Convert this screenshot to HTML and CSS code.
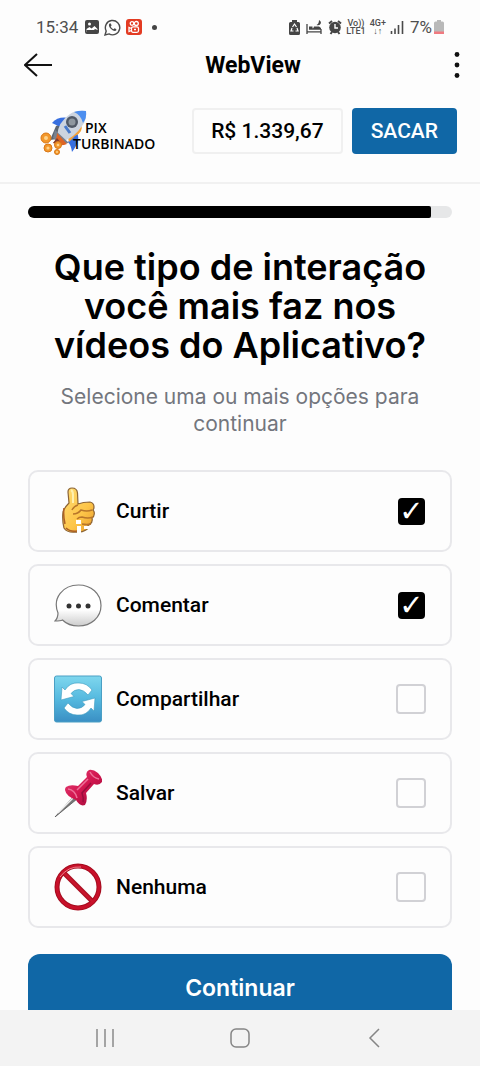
FILE: index.html
```html
<!DOCTYPE html>
<html lang="pt-BR">
<head>
	<title>WebView</title>
	<meta charset="UTF-8">
	<meta name="viewport" content="width=device-width, initial-scale=1.0">
	<link rel="stylesheet" href="styles.css">
</head>
<body>
	<div class="status-bar">
		<span>15:34</span>
		<svg class="status-image" width="14" height="14" viewBox="0 0 14 14"><rect width="14" height="14" rx="2" fill="#454545"/><circle cx="4.500" cy="4" r="1.500" fill="#fff"/><path d="M1.500 12V9l3-2 2 1.500L9.500 6l3 3v1L10 9 7 12z" fill="#fff"/><path d="M1.500 11h11" stroke="#454545" stroke-width="2"/></svg>
		<svg width="17" height="17" viewBox="0 0 17 17"><path d="M1 16l1.200-4A7.200 7.200 0 1 1 5 14.900z" fill="none" stroke="#4a4a4a" stroke-width="1.400"/><path d="M5.700 4.500c-1.500 1-.8 3.500 1.300 5.500s4.500 2.700 5.300 1.200c.4-.8 0-1.200-1.700-2l-1.100 1C8.200 9.700 7 8.400 6.700 7.400l.9-1C7 4.800 6.500 4 5.700 4.500z" fill="#4a4a4a"/></svg>
		<svg width="16" height="16" viewBox="0 0 16 16"><rect width="16" height="16" rx="3" fill="#e33b22"/><g fill="none" stroke="#fff" stroke-width="1.300"><circle cx="6" cy="4.500" r="1.800"/><circle cx="10.300" cy="4.500" r="2"/><rect x="5.500" y="7.800" width="7" height="5.500" rx="1.500"/><path d="M5.500 9.500L3 8.500v4l2.500-1"/><path d="M8 10.500h2"/></g></svg>
		<span class="dot"></span>
		<div class="status-right">
			<svg width="11" height="15" viewBox="0 0 11 15"><path d="M3 0h5v2h1.500Q11 2 11 3.500v10Q11 15 9.500 15h-8Q0 15 0 13.500v-10Q0 2 1.500 2H3z" fill="#454545"/><path d="M3.500 7l2-3 2 3M8 8l1 3H6.500M4.500 11H2l1-3" fill="none" stroke="#fff" stroke-width="1.200"/></svg>
			<svg class="status-bed" width="16" height="15" viewBox="0 0 16 15"><path d="M1 4v10M1 11.800h14M15 14V9M3 9h12" fill="none" stroke="#454545" stroke-width="1.300"/><path d="M3 6.500h3.500V9H3zM7 9l1-2.500h5l2 1.500v1z" fill="#454545"/><path d="M13 0q2 1 2 3-1 3-4.500 2Q13 4 13 0z" fill="#454545"/></svg>
			<svg class="status-alarm" width="14" height="15" viewBox="0 0 14 15"><circle cx="7" cy="7.500" r="5.800" fill="#454545"/><path d="M1 3.500L4 1M13 3.500L10 1M2.500 14l1.500-2M11.500 14L10 12" stroke="#454545" stroke-width="2"/><path d="M7 4v4h3" fill="none" stroke="#fff" stroke-width="1.400"/></svg>
			<span class="net">Vo))<br>LTE1</span>
			<span class="net">4G+<br>↓↑</span>
			<svg width="14" height="14" viewBox="0 0 14 14"><path d="M1.500 14v-3M5 14V8.500M8.500 14V5M12.500 14V1" stroke="#4a4a4a" stroke-width="1.600"/></svg>
			<span class="battery">7%<svg width="10" height="14" viewBox="0 0 10 14"><path d="M3 0h4v1.500h1.500Q10 1.500 10 3v11H0V3q0-1.500 1.500-1.500H3z" fill="#b9b9b9"/><path d="M0 11.500h10V14H0z" fill="#f07a80"/></svg></span>
		</div>
	</div>

	<div class="title-bar">
		<button class="icon-btn" type="button" aria-label="Voltar">
			<svg width="28" height="26" viewBox="0 0 28 26"><path d="M13 2L1 13l12 11M1 13h27" fill="none" stroke="#111" stroke-width="2"/></svg>
		</button>
		<span class="page-name">WebView</span>
		<button class="icon-btn" type="button" aria-label="Mais">
			<svg width="6" height="26" viewBox="0 0 6 26"><g fill="#111"><circle cx="3" cy="2.500" r="2.400"/><circle cx="3" cy="13" r="2.400"/><circle cx="3" cy="23.500" r="2.400"/></g></svg>
		</button>
	</div>

	<header class="header">
		<div class="logo">
			<svg width="48" height="48" viewBox="0 0 48 48">
				<path d="M10 31l6-14 14-6-6 18z" fill="#5b6573"/>
				<path d="M12 14q6-7 17-5l-6 9q-6-1-11-4z" fill="#376fe0"/>
				<path d="M36 22q6 8-4 21-1-7-4-10z" fill="#376fe0"/>
				<path d="M41 15q3 8-6 12l-6 6-1-4z" fill="#f5a33b"/>
				<path d="M17 27Q18 13 30 5q6-4 16-3 1 9-4 15-7 11-20 16z" fill="#ccd4df"/>
				<path d="M34 3q6-2 12-1 1 7-3 12-2-8-9-11z" fill="#4c8eef"/>
				<path d="M15 21l14 13-9 1-7-6z" fill="#77818f"/>
				<circle cx="32" cy="13" r="6" fill="#505966"/><circle cx="32" cy="13" r="3.500" fill="#8e979f"/>
				<path d="M17 24l10 11q-7 3-14-1 4-4 4-10z" fill="#dd6425"/><path d="M17 29l4 5-8 0z" fill="#843f2e"/>
				<path d="M25 17l5 7" stroke="#4779ca" stroke-width="3"/>
				<g fill="#f3982c" stroke="#d97817"><circle cx="6" cy="29" r="5"/><circle cx="8" cy="39" r="4"/><circle cx="18" cy="36" r="3.500"/><circle cx="17" cy="43" r="2.500"/></g>
				<g fill="#ffd38a"><circle cx="6" cy="29" r="2"/><circle cx="8" cy="39" r="1.600"/><circle cx="18" cy="36" r="1.300"/><circle cx="17" cy="43" r="1"/></g>
			</svg>
			<div class="logo-text"><div class="logo-pix">PIX</div><div>TURBINADO</div></div>
		</div>
		<div class="balance">R$ 1.339,67</div>
		<button class="withdraw" type="button">SACAR</button>
	</header>

	<main class="quiz">
		<div class="progress"><div class="progress-fill" style="width: 95%"></div></div>
		<h1>Que tipo de interação você mais faz nos vídeos do Aplicativo?</h1>
		<p class="hint">Selecione uma ou mais opções para continuar</p>

		<form class="options">
			<label class="option">
				<svg class="emoji" viewBox="0 0 48 48">
					<defs><linearGradient id="skin" x1="0" y1="0" x2="1" y2="1"><stop offset="0" stop-color="#ffdc75"/><stop offset=".6" stop-color="#fdc548"/><stop offset="1" stop-color="#e89a2c"/></linearGradient></defs>
					<path d="M14 5q0-4 4-4 5 0 5.500 5L24 17q5-2 12-2 4 1 4 5 0 2-1 3 2 2 1 5 0 2-2 3 1 4-2 6-1 1-2 1 1 4-2 5-5 3-10 2-9 1-12-4-2-8-1-16 1-4 6-9z" fill="url(#skin)" stroke="#8c6435" stroke-width="1.200"/>
					<path d="M38 23q-5 2-11 0-3 4-8 4M39 30q-5 2-11 0-3 0-5 2m14 5q-4 1-9 0M24 18q-4 1-6 5" fill="none" stroke="#b8762a" stroke-width="1.500"/>
					<path d="M17 3q2 1 2 5v8" fill="none" stroke="#fff0af" stroke-width="2"/>
					<path d="M12 41q4 4 11 3M10 21q-1 8 1 16" fill="none" stroke="#ac6025" stroke-width="1.500"/>
					<path d="M22 33h5v4h-5zM23 39h4v8h-4zM30 39h5v3h-5z" fill="#fff"/>
				</svg>
				<span class="option-name">Curtir</span>
				<input type="checkbox" name="interacao" value="curtir" checked>
			</label>
			<label class="option">
				<svg class="emoji" viewBox="0 0 48 48">
					<defs><linearGradient id="bubble" x1="0" y1="0" x2="0" y2="1"><stop offset=".6" stop-color="#fff"/><stop offset="1" stop-color="#ccc"/></linearGradient></defs>
					<path d="M24.500 4C37 4 47 12.500 47 24.500S37 45 24.500 45c-7 0-12-2-16-6-2 1-4 1-7.500 1 2-2 3-4 3-8-6-15 5-28 20.500-28z" fill="url(#bubble)" stroke="#777" stroke-width="1.200"/>
					<g fill="#333"><circle cx="15" cy="25" r="2.500"/><circle cx="24.500" cy="25" r="2.500"/><circle cx="34" cy="25" r="2.500"/></g>
				</svg>
				<span class="option-name">Comentar</span>
				<input type="checkbox" name="interacao" value="comentar" checked>
			</label>
			<label class="option">
				<svg class="emoji" viewBox="0 0 48 48">
					<defs><linearGradient id="sky" x1="0" y1="0" x2="0" y2="1"><stop offset="0" stop-color="#7fd7ee"/><stop offset=".5" stop-color="#55b9df"/><stop offset="1" stop-color="#3a8fc4"/></linearGradient></defs>
					<rect x=".5" y="1" width="47" height="46" rx="2" fill="url(#sky)" stroke="#4a9fc4"/>
					<g fill="#fff" stroke="#3e9cc0" stroke-width=".6">
						<path d="M8 12l3 3Q16 7 25 8q8 0 13 7l-4 5q-4-5-9-5.500-5 0-8 4l3 3L7 25z"/>
						<path d="M8 12l3 3Q16 7 25 8q8 0 13 7l-4 5q-4-5-9-5.500-5 0-8 4l3 3L7 25z" transform="rotate(180 24 24)"/>
					</g>
				</svg>
				<span class="option-name">Compartilhar</span>
				<input type="checkbox" name="interacao" value="compartilhar">
			</label>
			<label class="option">
				<svg class="emoji" viewBox="0 0 48 48">
					<defs><linearGradient id="pin" x1="0" y1="0" x2="1" y2="1"><stop offset="0" stop-color="#e8477d"/><stop offset=".5" stop-color="#d2164f"/><stop offset="1" stop-color="#970b38"/></linearGradient></defs>
					<path d="M20 27L1 48l22-18z" fill="#777" stroke="#555" stroke-width=".8"/><path d="M19 29L4 44" stroke="#eee" stroke-width="1.500"/>
					<path d="M12 18q4-3 12-1l9-9q-2-5 2-7 4-1 9 3 5 5 4 9-3 4-8 2l-8 9q2 7-1 12-5 2-9-5-10-4-11-10 0-2 1-3z" fill="url(#pin)"/>
					<path d="M34 10L23 21M14 20q7 1 9 9M36 3q3 6 9 7" fill="none" stroke="#ee6f97" stroke-width="1.500"/>
					<path d="M37 14l-9 10q2 5 1 9" fill="none" stroke="#990e3d" stroke-width="1.500"/>
				</svg>
				<span class="option-name">Salvar</span>
				<input type="checkbox" name="interacao" value="salvar">
			</label>
			<label class="option">
				<svg class="emoji" viewBox="0 0 48 48">
					<g fill="none"><path d="M9 9l30 30" stroke="#a90d20" stroke-width="5"/><circle cx="24" cy="24" r="21" stroke="#a40c1e" stroke-width="5"/><circle cx="24" cy="24" r="21" stroke="#c8102a" stroke-width="3"/><path d="M9 9l30 30" stroke="#c8152c" stroke-width="2.500"/><path d="M6 14Q14 3 27 4" stroke="#f0808c"/></g>
				</svg>
				<span class="option-name">Nenhuma</span>
				<input type="checkbox" name="interacao" value="nenhuma">
			</label>
			<button class="continue" type="submit">Continuar</button>
		</form>
	</main>

	<nav class="nav-bar">
		<button class="icon-btn" type="button" aria-label="Recentes"><svg width="20" height="20" viewBox="0 0 20 20"><path d="M2 1v18M10 1v18M18 1v18" stroke="#8b8b8b" stroke-width="1.500"/></svg></button>
		<button class="icon-btn" type="button" aria-label="Início"><svg width="20" height="20" viewBox="0 0 20 20"><rect x="1" y="1" width="18" height="18" rx="5" fill="none" stroke="#858585" stroke-width="1.500"/></svg></button>
		<button class="icon-btn" type="button" aria-label="Voltar"><svg width="20" height="20" viewBox="0 0 20 20"><path d="M14 1L5 10l9 9" fill="none" stroke="#858585" stroke-width="1.500"/></svg></button>
	</nav>
</body>
</html>
```
FILE: styles.css
```css
* {
	box-sizing: border-box;
}
body {
	margin: 0;
	height: 100vh;
	display: flex;
	flex-direction: column;
	overflow: hidden;
	font-family: Roboto, sans-serif;
	background-color: #fdfdfd;
	color: #000;
}
svg {
	display: block;
	flex: none;
}
button {
	border: none;
	cursor: pointer;
}
.icon-btn {
	background: none;
	padding: 0;
}

/* Phone status bar */
.status-bar {
	display: flex;
	align-items: center;
	gap: 5px;
	height: 46px;
	padding: 8px 36px 0;
	font-size: 17px;
	color: #4f4f4f;
}
.status-image {
	margin-left: 2px;
}
.dot {
	width: 5px;
	height: 5px;
	margin-left: 5px;
	border-radius: 50%;
	background-color: #454545;
}
.status-right {
	display: flex;
	align-items: center;
	gap: 4px;
	margin-left: auto;
}
.status-bed {
	margin: 0 2px;
}
.net {
	font-size: 9px;
	font-weight: 500;
	line-height: 8px;
	text-align: center;
}
.battery {
	display: flex;
	align-items: center;
	gap: 2px;
	margin-left: 2px;
}

.title-bar {
	display: flex;
	align-items: center;
	justify-content: space-between;
	height: 38px;
	padding: 0 20px 0 24px;
}
.page-name {
	font-size: 23px;
	font-weight: 700;
}

/* Logo and balance */
.header {
	display: flex;
	align-items: center;
	height: 100px;
	padding: 0 23px 4px 40px;
	border-bottom: 2px solid #f1f1f1;
}
.logo {
	display: flex;
	align-items: center;
	margin-right: auto;
	padding-top: 4px;
}
.logo-text {
	margin-left: -15px;
	padding-top: 6px;
	font-family: "Open Sans", sans-serif;
	font-size: 14px;
	font-weight: 600;
	line-height: 16px;
}
.logo-pix {
	padding-left: 12px;
}
.balance, .withdraw {
	height: 46px;
	border-radius: 4px;
	font-family: Roboto, sans-serif;
	font-size: 21px;
	font-weight: 500;
	line-height: 42px;
}
.balance {
	padding: 0 17px;
	border: 2px solid #f0f0f0;
	margin-right: 9px;
}
.withdraw {
	padding: 0 19px;
	background-color: #1067a6;
	color: #fff;
}

/* Question */
.quiz {
	flex: 1;
	min-height: 0;
	padding: 22px 28px 0;
	overflow: hidden;
	text-align: center;
}
.progress {
	height: 12px;
	border-radius: 6px;
	background-color: #e6e7e8;
	overflow: hidden;
}
.progress-fill {
	height: 12px;
	border-radius: 0 2px 2px 0;
	background-color: #000;
}
h1 {
	margin: 30px 0 0;
	font-family: Inter, sans-serif;
	font-size: 36px;
	font-weight: 600;
	line-height: 39px;
}
.hint {
	margin: 18px 0 0;
	font-family: Inter, sans-serif;
	font-size: 21px;
	line-height: 27px;
	color: #73767d;
}
.options {
	display: flex;
	flex-direction: column;
	gap: 12px;
	margin-top: 33px;
}
.option {
	display: flex;
	align-items: center;
	gap: 14px;
	padding: 15px 24px;
	border: 2px solid #e8e8eb;
	border-radius: 10px;
	cursor: pointer;
}
.emoji {
	width: 48px;
	height: 48px;
}
.option-name {
	font-size: 21px;
	font-weight: 500;
}
.option input {
	appearance: none;
	display: grid;
	place-items: center;
	width: 30px;
	height: 30px;
	margin: 0 0 0 auto;
	border: 2px solid #d1d1d5;
	border-radius: 4px;
}
.option input:checked {
	width: 27px;
	height: 27px;
	margin-right: 1px;
	border: none;
	background-color: #000;
}
.option input:checked::before {
	content: "✓";
	font-family: "DejaVu Sans", sans-serif;
	font-size: 29px;
	line-height: 27px;
	color: #fff;
}
.continue {
	height: 68px;
	margin-top: 14px;
	border-radius: 12px;
	background-color: #1067a6;
	color: #fff;
	font-family: Inter, sans-serif;
	font-size: 23px;
	font-weight: 600;
}

/* Phone navigation */
.nav-bar {
	display: flex;
	align-items: center;
	justify-content: space-around;
	height: 56px;
	padding: 0 38px;
	background-color: #f3f3f3;
}
```
